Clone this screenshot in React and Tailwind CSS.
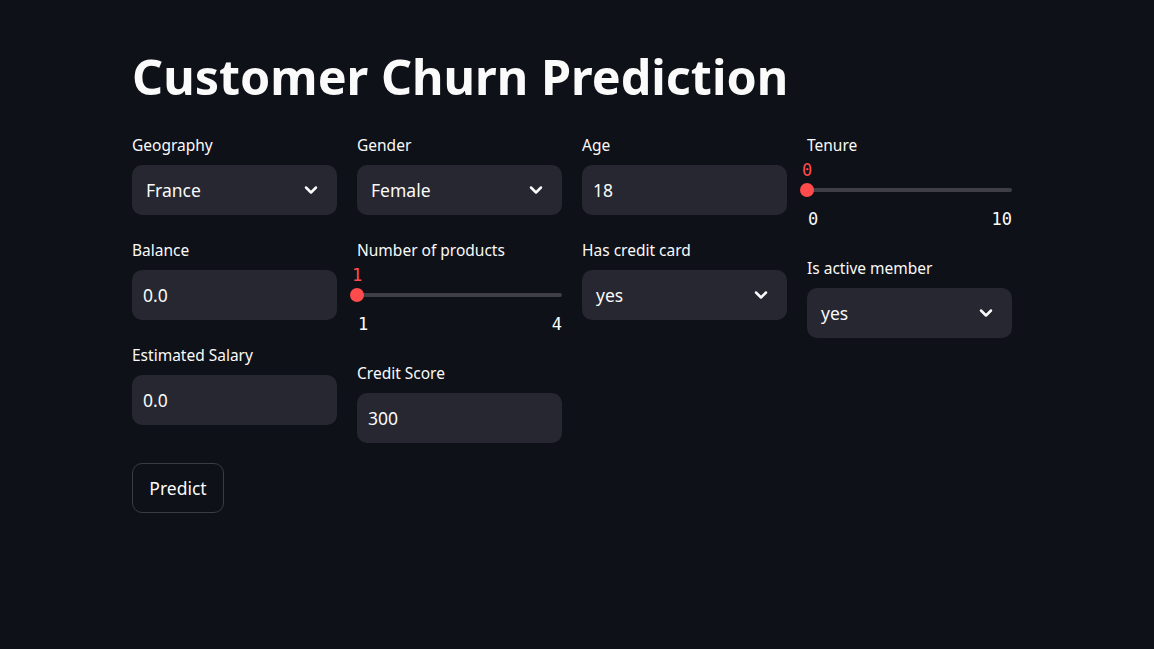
import { ChevronDown } from 'lucide-react';

const sans = "font-['Noto_Sans',sans-serif]";
const mono = "font-['DejaVu_Sans_Mono',monospace]";

const Label = ({ children, spaced = true }) => (
  <div className={`h-[24px] text-[15.5px] leading-[24px] text-[#fafafa] ${spaced ? 'mb-[8px]' : ''}`}>
    {children}
  </div>
);

const SelectBox = ({ label, value }) => (
  <div>
    <Label>{label}</Label>
    <div className="flex h-[50px] items-center justify-between rounded-[10px] bg-[#262730] pl-[14px] pr-[16px]">
      <span className="text-[17.5px] text-[#fafafa]">{value}</span>
      <ChevronDown size={20} strokeWidth={3} className="text-[#fafafa]" />
    </div>
  </div>
);

const NumberInput = ({ label, value }) => (
  <div>
    <Label>{label}</Label>
    <div className="flex h-[50px] items-center rounded-[10px] bg-[#262730] pl-[11px]">
      <span className="text-[17.5px] text-[#fafafa]">{value}</span>
    </div>
  </div>
);

const Slider = ({ label, value, min, max }) => (
  <div>
    <Label spaced={false}>{label}</Label>
    <div className="h-[76px]">
      <div className="relative h-[24px]">
        <span className={`absolute left-0 top-[1px] -translate-x-1/2 text-[17px] leading-[24px] text-[#ff4b4b] ${mono}`}>
          {value}
        </span>
      </div>
      <div className="relative flex h-[18px] items-center">
        <div className="h-[4px] w-full rounded-full bg-[#3d3e46]" />
        <div className="absolute left-[-7px] top-[2px] h-[14px] w-[14px] rounded-full bg-[#ff4b4b]" />
      </div>
      <div className={`mt-[8px] flex h-[24px] justify-between text-[17px] leading-[24px] text-[#fafafa] ${mono}`}>
        <span className="pl-[1px]">{min}</span>
        <span>{max}</span>
      </div>
    </div>
  </div>
);

export default function App() {
  return (
    <div className={`min-h-[649px] w-full bg-[#0e1117] ${sans}`}>
      <div className="ml-[132px] w-[880px] pt-[47px]">
        <h1 className="text-[48.5px] font-bold leading-[59px] text-[#fafafa]">Customer Churn Prediction</h1>

        <div className="mt-[27px] grid grid-cols-4 gap-x-[20px]">
          <div className="flex flex-col gap-[23px]">
            <SelectBox label="Geography" value="France" />
            <NumberInput label="Balance" value="0.0" />
            <NumberInput label="Estimated Salary" value="0.0" />
          </div>
          <div className="flex flex-col gap-[23px]">
            <SelectBox label="Gender" value="Female" />
            <Slider label="Number of products" value="1" min="1" max="4" />
            <NumberInput label="Credit Score" value="300" />
          </div>
          <div className="flex flex-col gap-[23px]">
            <NumberInput label="Age" value="18" />
            <SelectBox label="Has credit card" value="yes" />
          </div>
          <div className="flex flex-col gap-[23px]">
            <Slider label="Tenure" value="0" min="0" max="10" />
            <SelectBox label="Is active member" value="yes" />
          </div>
        </div>

        <button
          type="button"
          className="mt-[20px] h-[50px] w-[92px] rounded-[10px] border border-[#3a3c44] bg-transparent text-[17.5px] text-[#fafafa]"
        >
          Predict
        </button>
      </div>
    </div>
  );
}
